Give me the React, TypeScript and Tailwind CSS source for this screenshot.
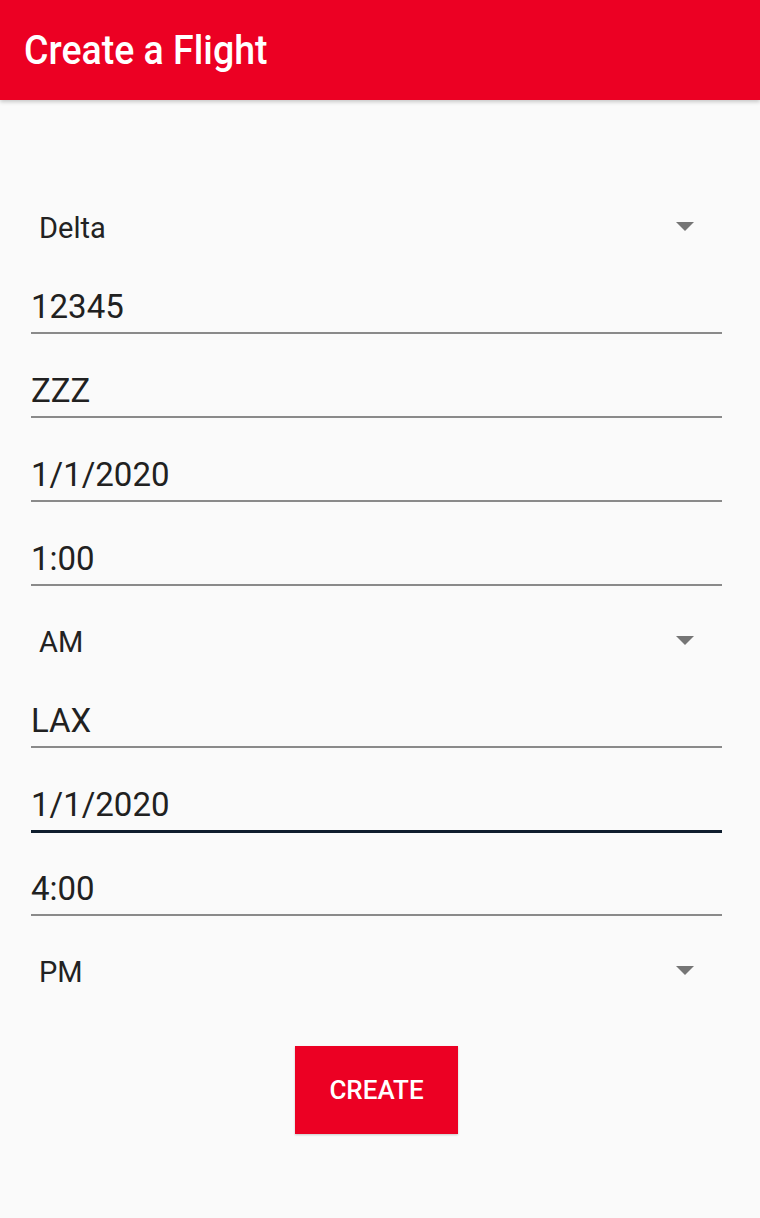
import React from 'react';

const font = { fontFamily: 'Roboto, "Noto Sans", sans-serif' };

function Spinner({ value }: { value: string }) {
  return (
    <div className="flex h-[78px] items-end pb-[7px] pl-[39px] pr-[66px]">
      <div className="flex h-[32px] flex-1 items-center justify-between">
        <span className="text-[29px] leading-none text-[#222]">{value}</span>
        <svg width="18" height="10" viewBox="0 0 18 10" className="mt-[-2px]">
          <path d="M0 0 L18 0 L9 9 Z" fill="#757575" />
        </svg>
      </div>
    </div>
  );
}

function Field({ value, focused }: { value: string; focused?: boolean }) {
  return (
    <div className="flex h-[84px] flex-col justify-end pl-[31px] pr-[38px]">
      <div className="pb-[9px] text-[33px] leading-none text-[#212121]">{value}</div>
      <div className={focused ? 'h-[3px] bg-[#0f1e2e]' : 'mb-px h-[2px] bg-[#8a8a8a]'} />
    </div>
  );
}

export default function App() {
  return (
    <div className="min-h-[1218px] w-[760px] bg-[#fafafa]" style={font}>
      <header className="flex h-[100px] items-center bg-[#ec0023] px-[24px] shadow-[0_2px_4px_rgba(0,0,0,0.2)]">
        <h1 className="origin-left scale-y-[1.07] text-[37.5px] font-medium text-white">Create a Flight</h1>
      </header>

      <div className="pt-[73px]">
        <Spinner value="Delta" />
        <Field value="12345" />
        <Field value="ZZZ" />
        <Field value="1/1/2020" />
        <Field value="1:00" />
        <Spinner value="AM" />
        <Field value="LAX" />
        <Field value="1/1/2020" focused />
        <Field value="4:00" />
        <Spinner value="PM" />
      </div>

      <div className="flex justify-center pt-[51px]">
        <button className="mr-[7px] h-[88px] w-[163px] bg-[#ec0023] text-[26px] font-medium text-white shadow-[0_1px_2px_rgba(0,0,0,0.2)]">
          CREATE
        </button>
      </div>
    </div>
  );
}
